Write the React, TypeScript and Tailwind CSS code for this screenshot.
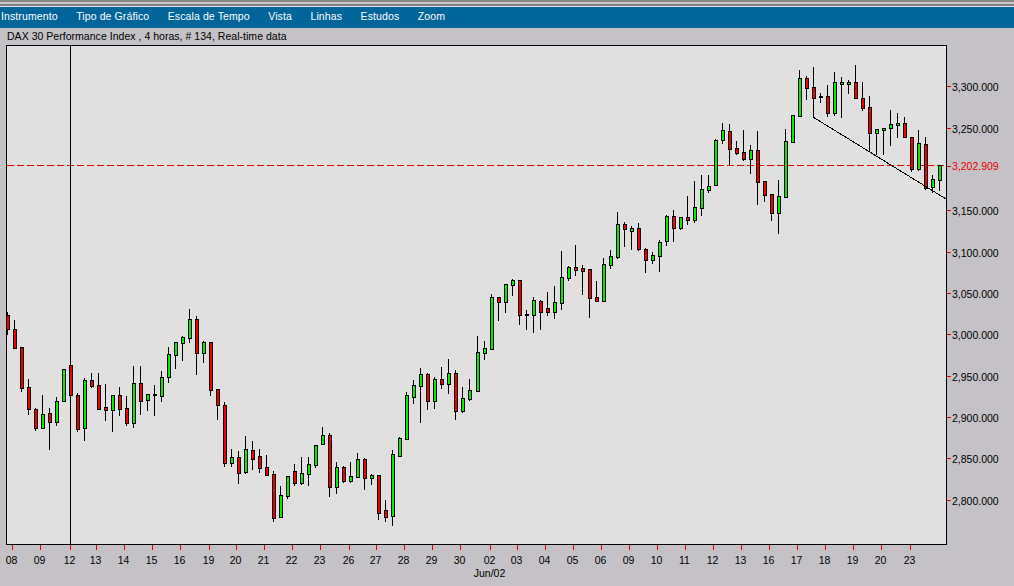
import React from 'react';

type Candle = [number, number, number, number, 'g' | 'r'];

// high, body top, body bottom, low in screen pixels
const candles: Candle[] = [
  [312, 315, 329, 334, 'r'], [320, 329, 348, 348, 'r'], [347, 347, 388, 391, 'r'], [379, 387, 409, 414, 'r'],
  [408, 409, 428, 430, 'r'], [395, 414, 428, 428, 'g'], [408, 413, 422, 449, 'r'], [397, 401, 422, 425, 'g'],
  [369, 369, 401, 401, 'g'], [365, 365, 395, 395, 'r'], [393, 395, 429, 431, 'r'], [378, 380, 428, 440, 'g'],
  [373, 380, 386, 387, 'r'], [373, 385, 409, 409, 'r'], [384, 407, 410, 420, 'r'], [395, 395, 410, 431, 'g'],
  [387, 395, 409, 415, 'r'], [396, 408, 423, 425, 'r'], [366, 383, 423, 427, 'g'], [366, 383, 401, 414, 'r'],
  [394, 394, 400, 410, 'g'], [385, 394, 395, 415, 'g'], [371, 377, 396, 401, 'g'], [347, 354, 377, 382, 'g'],
  [342, 342, 355, 368, 'g'], [336, 337, 343, 360, 'g'], [309, 319, 338, 342, 'g'], [316, 319, 353, 374, 'r'],
  [341, 342, 353, 362, 'g'], [342, 342, 390, 395, 'r'], [389, 389, 405, 419, 'r'], [402, 405, 463, 466, 'r'],
  [449, 457, 463, 466, 'g'], [451, 457, 473, 483, 'r'], [436, 449, 472, 473, 'g'], [441, 450, 459, 469, 'r'],
  [449, 456, 468, 472, 'r'], [455, 467, 475, 475, 'r'], [471, 474, 518, 521, 'r'], [486, 495, 517, 517, 'g'],
  [476, 476, 496, 498, 'g'], [464, 471, 483, 485, 'r'], [457, 473, 483, 484, 'g'], [457, 464, 474, 485, 'g'],
  [445, 445, 465, 467, 'g'], [427, 435, 444, 444, 'g'], [433, 435, 487, 496, 'r'], [462, 467, 487, 493, 'g'],
  [466, 467, 481, 482, 'r'], [462, 476, 481, 482, 'g'], [453, 459, 477, 477, 'g'], [458, 459, 478, 489, 'r'],
  [474, 475, 478, 484, 'g'], [475, 475, 513, 519, 'r'], [500, 510, 517, 521, 'r'], [450, 454, 516, 525, 'g'],
  [437, 438, 456, 456, 'g'], [392, 395, 439, 439, 'g'], [380, 385, 397, 403, 'g'], [368, 374, 386, 422, 'g'],
  [373, 374, 401, 409, 'r'], [377, 379, 401, 408, 'g'], [367, 379, 384, 388, 'r'], [359, 373, 384, 393, 'g'],
  [370, 373, 411, 419, 'r'], [387, 398, 411, 412, 'g'], [379, 390, 399, 400, 'g'], [336, 352, 391, 391, 'g'],
  [341, 348, 353, 359, 'g'], [294, 297, 349, 349, 'g'], [297, 297, 302, 320, 'r'], [284, 284, 302, 312, 'g'],
  [279, 280, 285, 295, 'g'], [280, 280, 315, 324, 'r'], [310, 314, 315, 329, 'g'], [297, 300, 315, 332, 'g'],
  [300, 301, 312, 329, 'r'], [292, 308, 312, 315, 'r'], [286, 302, 312, 318, 'g'], [251, 277, 303, 309, 'g'],
  [266, 267, 278, 280, 'g'], [245, 267, 270, 275, 'r'], [265, 268, 271, 294, 'r'], [269, 269, 298, 317, 'r'],
  [281, 297, 301, 301, 'r'], [258, 264, 301, 301, 'g'], [250, 256, 265, 268, 'g'], [212, 224, 257, 258, 'g'],
  [222, 224, 229, 246, 'r'], [226, 228, 231, 249, 'g'], [223, 228, 249, 250, 'r'], [248, 249, 260, 272, 'r'],
  [252, 255, 260, 263, 'g'], [240, 242, 256, 271, 'g'], [215, 216, 241, 245, 'g'], [210, 216, 228, 241, 'r'],
  [217, 217, 228, 229, 'g'], [196, 217, 220, 224, 'r'], [181, 207, 220, 222, 'g'], [175, 189, 208, 215, 'g'],
  [175, 186, 190, 192, 'g'], [139, 140, 185, 185, 'g'], [123, 130, 140, 143, 'g'], [124, 131, 149, 165, 'r'],
  [141, 148, 153, 154, 'r'], [130, 152, 159, 160, 'r'], [145, 150, 159, 173, 'g'], [131, 150, 182, 204, 'r'],
  [181, 181, 195, 201, 'r'], [194, 194, 213, 220, 'r'], [180, 196, 213, 233, 'g'], [129, 141, 197, 197, 'g'],
  [115, 115, 142, 142, 'g'], [70, 78, 116, 116, 'g'], [76, 78, 88, 99, 'r'], [67, 87, 98, 116, 'r'],
  [93, 96, 97, 102, 'g'], [85, 96, 113, 116, 'r'], [72, 82, 113, 115, 'g'], [77, 82, 84, 117, 'g'],
  [80, 82, 84, 93, 'g'], [65, 82, 98, 98, 'r'], [82, 98, 108, 110, 'r'], [96, 107, 133, 150, 'r'],
  [129, 129, 133, 154, 'g'], [128, 128, 130, 154, 'g'], [110, 124, 128, 145, 'g'], [113, 123, 125, 137, 'g'],
  [117, 123, 137, 137, 'r'], [137, 137, 169, 171, 'r'], [130, 143, 169, 170, 'g'], [137, 144, 188, 189, 'r'],
  [175, 179, 187, 192, 'g'], [165, 165, 180, 190, 'g'],
];

const menu = ['Instrumento', 'Tipo de Gráfico', 'Escala de Tempo', 'Vista', 'Linhas', 'Estudos', 'Zoom'];

const prices: [string, number][] = [
  ['3,300.000', 86], ['3,250.000', 128], ['3,150.000', 210], ['3,100.000', 252], ['3,050.000', 293],
  ['3,000.000', 334], ['2,950.000', 376], ['2,900.000', 417], ['2,850.000', 458], ['2,800.000', 500],
];

const dates: [string, number][] = [
  ['08', 12], ['09', 40], ['12', 70], ['13', 96], ['14', 124], ['15', 152], ['16', 180], ['19', 209], ['20', 236],
  ['21', 264], ['22', 292], ['23', 320], ['26', 349], ['27', 376], ['28', 404], ['29', 432], ['30', 460], ['02', 490],
  ['03', 517], ['04', 545], ['05', 573], ['06', 601], ['09', 629], ['10', 657], ['11', 685], ['12', 713], ['13', 741],
  ['16', 769], ['17', 797], ['18', 825], ['19', 853], ['20', 881], ['23', 910],
];

const candleX = (i: number) => (i <= 66 ? 8 + 7 * i : 9 + 7 * i);

const Plot: React.FC = () => (
  <svg viewBox="7 46 939 498" className="block h-[498px] w-[939px]" shapeRendering="crispEdges">
    <line x1="7" x2="946" y1="165.5" y2="165.5" stroke="#e60000" strokeDasharray="7 3" />
    <rect x="70" y="46" width="1" height="498" fill="#000" />
    {candles.map(([high, top, bottom, low, color], i) => {
      const x = candleX(i);
      const h = bottom - top + 1;
      return (
        <g key={i}>
          <rect x={x - 1} y={high} width="1" height={low - high + 1} fill="#000" />
          <rect x={x - 2} y={top} width="4" height={h} fill="#000" />
          {h > 2 && <rect x={x - 1} y={top + 1} width="2" height={h - 2} fill={color === 'g' ? '#00f000' : '#f00000'} />}
        </g>
      );
    })}
    <line x1="813" y1="117" x2="946" y2="199" stroke="#000" />
  </svg>
);

const PriceAxis: React.FC = () => (
  <svg viewBox="947 45 67 500" className="block h-[500px] w-[67px] text-[10.5px]">
    {prices.map(([label, y]) => (
      <g key={label}>
        <rect x="947" y={y} width="4" height="1" fill="#e60000" shapeRendering="crispEdges" />
        <text x="952" y={y + 4.5} fill="#000">{label}</text>
      </g>
    ))}
    <rect x="947" y="166" width="4" height="1" fill="#e60000" shapeRendering="crispEdges" />
    <text x="952" y="170" fill="#e60000">3,202.909</text>
  </svg>
);

const DateAxis: React.FC = () => (
  <svg viewBox="0 545 1014 41" className="block h-[41px] w-[1014px] text-[10.5px]">
    {dates.map(([label, x], i) => (
      <g key={i}>
        <rect x={x} y="545" width="1" height="5" fill="#e60000" shapeRendering="crispEdges" />
        <text x={x - 0.5} y="564" textAnchor="middle" fill="#000">{label}</text>
      </g>
    ))}
    <text x="489.5" y="577" textAnchor="middle" fill="#000">Jun/02</text>
  </svg>
);

export default function App() {
  return (
    <div className="flex h-[586px] w-[1014px] flex-col overflow-hidden bg-[#c4c2c6] font-['Liberation_Sans',Arial,sans-serif]">
      <div className="flex h-[7px] flex-col">
        <div className="h-[2px] bg-[#8a8a8a]" />
        <div className="h-[2px] bg-[#c8c8c8]" />
        <div className="h-[2px] bg-[#808080]" />
        <div className="h-[1px] bg-[#e8e8e8]" />
      </div>
      <nav className="flex h-[21px] items-center gap-[18.5px] bg-[#006699] pb-[1px] pl-[1px] text-[10.5px] tracking-[0.11px] text-white">
        {menu.map((item) => (
          <span key={item}>{item}</span>
        ))}
      </nav>
      <div className="flex h-[17px] items-center pl-[7px] text-[10.5px] tracking-[0.03px] text-black">
        DAX 30 Performance Index , 4 horas, # 134, Real-time data
      </div>
      <div className="flex pl-[6px]">
        <div className="h-[500px] w-[941px] border border-black bg-[#e0e0e0]">
          <Plot />
        </div>
        <PriceAxis />
      </div>
      <DateAxis />
    </div>
  );
}
